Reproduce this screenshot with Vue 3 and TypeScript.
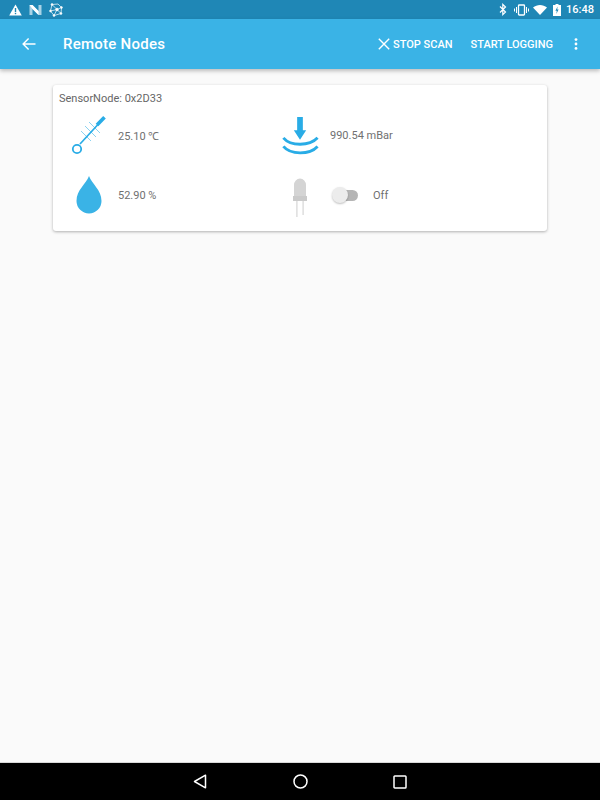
<script setup lang="ts">
const title: string = 'Remote Nodes'
</script>

<template>
  <div class="screen">
    <div class="status">
      <div class="status-left">
        <svg width="13" height="12" viewBox="0 0 13 12"><path d="M6.5 0.5 L12.8 11.5 H0.2 Z" fill="#fff"/><rect x="5.8" y="4" width="1.4" height="4" fill="#1f87b6"/><rect x="5.8" y="8.8" width="1.4" height="1.4" fill="#1f87b6"/></svg>
        <svg width="13" height="12" viewBox="0 0 13 12"><path d="M0.5 1 H3.5 L9.5 7 V1 H12.5 V11 H9.5 L3.5 5 V11 H0.5 Z" fill="#a9d3e6"/><path d="M0.5 1 H3.5 L9.5 7 V11 L3.5 5 Z" fill="#fff"/></svg>
        <svg width="14" height="14" viewBox="0 0 14 14" fill="none" stroke="#fff" stroke-width="0.7"><path d="M3 1.5 L8 6.5 L12.5 4.5 L9 1 L3 1.5 L1.5 8 L5 12.5 L8 6.5 L1.5 8 M12.5 4.5 L12 10.5 L5 12.5 M8 6.5 L12 10.5"/><circle cx="8" cy="6.5" r="1.3" fill="#fff"/><circle cx="3" cy="1.5" r="0.9" fill="#fff"/><circle cx="12.5" cy="4.5" r="0.9" fill="#fff"/><circle cx="5" cy="12.5" r="0.9" fill="#fff"/><circle cx="1.5" cy="8" r="0.9" fill="#fff"/><circle cx="12" cy="10.5" r="0.9" fill="#fff"/></svg>
      </div>
      <div class="status-right">
        <svg width="8" height="13" viewBox="0 0 8 13" fill="none" stroke="#fff" stroke-width="1.2"><path d="M1 3.5 L6.5 9 L3.8 11.6 V1.4 L6.5 4 L1 9.5"/></svg>
        <svg class="vib" width="15" height="12" viewBox="0 0 15 12" fill="none" stroke="#fff"><rect x="4.5" y="1" width="6" height="10" rx="0.8" stroke-width="1.3"/><path d="M2.5 3 V9 M12.5 3 V9 M0.5 4.5 V7.5 M14.5 4.5 V7.5" stroke-width="1"/></svg>
        <svg class="wifi" width="14" height="10" viewBox="0 0 14 10"><path d="M0 2.6 C4 -0.8 10 -0.8 14 2.6 L7 10 Z" fill="#fff"/></svg>
        <svg class="batt" width="8" height="12" viewBox="0 0 8 12"><path d="M2.5 0 H5.5 V1 H8 V12 H0 V1 H2.5 Z" fill="#fff"/><path d="M4.6 2.6 L2.4 6.8 H3.8 L3.3 10 L5.6 5.6 H4.2 Z" fill="#1f87b6"/></svg>
        <span class="time">16:48</span>
      </div>
    </div>

    <header class="bar">
      <svg class="back" width="14" height="14" viewBox="0 0 14 14" fill="none" stroke="#fff" stroke-width="1.4"><path d="M13.5 7 H1.2 M6.6 1.4 L1.1 7 L6.6 12.6"/></svg>
      <h1 class="title">{{ title }}</h1>
      <div class="actions">
        <div class="action stop">
          <svg width="12" height="12" viewBox="0 0 12 12" stroke="#fff" stroke-width="1.4"><path d="M0.8 0.8 L11.2 11.2 M11.2 0.8 L0.8 11.2"/></svg>
          <span>STOP SCAN</span>
        </div>
        <div class="action"><span>START LOGGING</span></div>
        <svg class="more" width="4" height="12" viewBox="0 0 4 12" fill="#fff"><circle cx="2" cy="1.6" r="1.4"/><circle cx="2" cy="6" r="1.4"/><circle cx="2" cy="10.4" r="1.4"/></svg>
      </div>
    </header>

    <main class="content">
      <section class="card">
        <div class="node">SensorNode: 0x2D33</div>
        <div class="grid">
          <div class="cell">
            <div class="icon-left">
              <svg width="36" height="44" viewBox="0 0 36 44" fill="none">
                <g stroke="#7fcdee" stroke-width="0.9">
                  <path d="M14 13 L25 24 M18 9 L29 20 M10 18 L20 28"/>
                </g>
                <path d="M9 31 L33 5" stroke="#29ace6" stroke-width="1.7"/>
                <path d="M26 12 L33.5 4.2" stroke="#29ace6" stroke-width="3.6"/>
                <circle cx="6" cy="36" r="4.2" stroke="#29ace6" stroke-width="1.8" fill="#fff"/>
              </svg>
            </div>
            <span class="value">25.10 ℃</span>
          </div>
          <div class="cell">
            <div class="icon-right">
              <svg width="40" height="44" viewBox="0 0 40 44" fill="none">
                <path d="M17 3 H23 V17 H26.5 L20 27 L13.5 17 H17 Z" fill="#29ace6"/>
                <path d="M2.5 25 C10 34 30 34 38.5 25" stroke="#29ace6" stroke-width="3"/>
                <path d="M2.5 34 C10 43 30 43 38.5 34" stroke="#29ace6" stroke-width="3"/>
              </svg>
            </div>
            <span class="value">990.54 mBar</span>
          </div>
          <div class="cell">
            <div class="icon-left">
              <svg width="28" height="40" viewBox="0 0 28 40"><path d="M14 1 C11 9 1.5 15 1.5 26 A12.5 12.5 0 0 0 26.5 26 C26.5 15 17 9 14 1 Z" fill="#3ab3e6"/></svg>
            </div>
            <span class="value">52.90 %</span>
          </div>
          <div class="cell">
            <div class="icon-right">
              <svg width="16" height="44" viewBox="0 0 16 44">
                <path d="M2 23 V12 A6 6.5 0 0 1 14 12 V23 Z" fill="#d4d4d4"/>
                <rect x="1" y="23" width="14" height="5" fill="#cacaca"/>
                <rect x="4" y="28" width="1.7" height="16" fill="#e2e2e2"/>
                <rect x="10.3" y="28" width="1.7" height="14" fill="#e2e2e2"/>
              </svg>
            </div>
            <div class="switch"><span class="track"></span><span class="thumb"></span></div>
            <span class="value off">Off</span>
          </div>
        </div>
      </section>
    </main>

    <footer class="nav">
      <svg width="14" height="15" viewBox="0 0 14 15" fill="none" stroke="#fff" stroke-width="1.5"><path d="M12.5 1.2 V13.8 L1.5 7.5 Z" stroke-linejoin="round"/></svg>
      <svg width="15" height="15" viewBox="0 0 15 15" fill="none" stroke="#fff" stroke-width="1.5"><circle cx="7.5" cy="7.5" r="6.5"/></svg>
      <svg width="14" height="14" viewBox="0 0 14 14" fill="none" stroke="#fff" stroke-width="1.5"><rect x="1" y="1" width="12" height="12" rx="0.8"/></svg>
    </footer>
  </div>
</template>

<style scoped>
.screen {
  width: 600px;
  height: 800px;
  display: flex;
  flex-direction: column;
  background: #fafafa;
  font-family: Roboto, "Liberation Sans", sans-serif;
  overflow: hidden;
}
.status {
  height: 19px;
  flex: none;
  background: #1f87b6;
  display: flex;
  align-items: center;
  justify-content: space-between;
  padding: 0 6px 0 9px;
  color: #fff;
}
.status-left, .status-right { display: flex; align-items: center; }
.status-left { gap: 7px; }
.vib { margin-left: 7px; }
.wifi { margin-left: 4px; }
.batt { margin-left: 6px; }
.time { margin-left: 5px; font-size: 11px; font-weight: 500; }
.bar {
  height: 50px;
  flex: none;
  background: #3ab3e6;
  display: flex;
  align-items: center;
  padding: 0 22px 0 22px;
  color: #fff;
  box-shadow: 0 2px 4px rgba(0, 0, 0, 0.25);
  position: relative;
  z-index: 1;
}
.back { margin-right: 27px; }
.title { margin: 0; font-size: 15px; font-weight: 500; letter-spacing: 0.25px; flex: 1; }
.actions { display: flex; align-items: center; }
.action { display: flex; align-items: center; font-size: 11px; font-weight: 500; color: #fff; }
.action svg { margin-right: 3px; }
.stop { margin-right: 18px; }
.more { margin-left: 21px; }
.content { flex: 1; padding: 16px 53px 0; }
.card {
  height: 146px;
  box-sizing: border-box;
  background: #fff;
  border-radius: 3px;
  box-shadow: 0 1px 3px rgba(0, 0, 0, 0.3);
  padding: 7px 6px 0;
}
.node { font-size: 11px; line-height: 13px; color: #666; }
.grid {
  display: grid;
  grid-template-columns: 222px 1fr;
  grid-auto-rows: 60px;
}
.cell { display: flex; align-items: center; }
.icon-left { width: 59px; display: flex; justify-content: center; }
.icon-right { width: 49px; display: flex; justify-content: center; padding-right: 11px; box-sizing: border-box; }
.value { font-size: 11px; color: #707070; }
.switch { position: relative; width: 26px; height: 16px; margin-left: 2px; }
.track {
  position: absolute;
  left: 4px;
  right: 0;
  top: 2.5px;
  height: 11px;
  border-radius: 5.5px;
  background: #b5b5b5;
}
.thumb {
  position: absolute;
  left: 0;
  top: 0;
  width: 16px;
  height: 16px;
  border-radius: 50%;
  background: #ececec;
  box-shadow: 0 1px 2px rgba(0, 0, 0, 0.25);
}
.off { margin-left: 15px; }
.nav {
  height: 37px;
  flex: none;
  background: #000;
  display: flex;
  align-items: center;
  justify-content: center;
  gap: 85.5px;
  box-shadow: 0 -1px 0 #d8d8d8;
}
</style>

<style>
html, body { margin: 0; padding: 0; background: #fafafa; }
</style>
